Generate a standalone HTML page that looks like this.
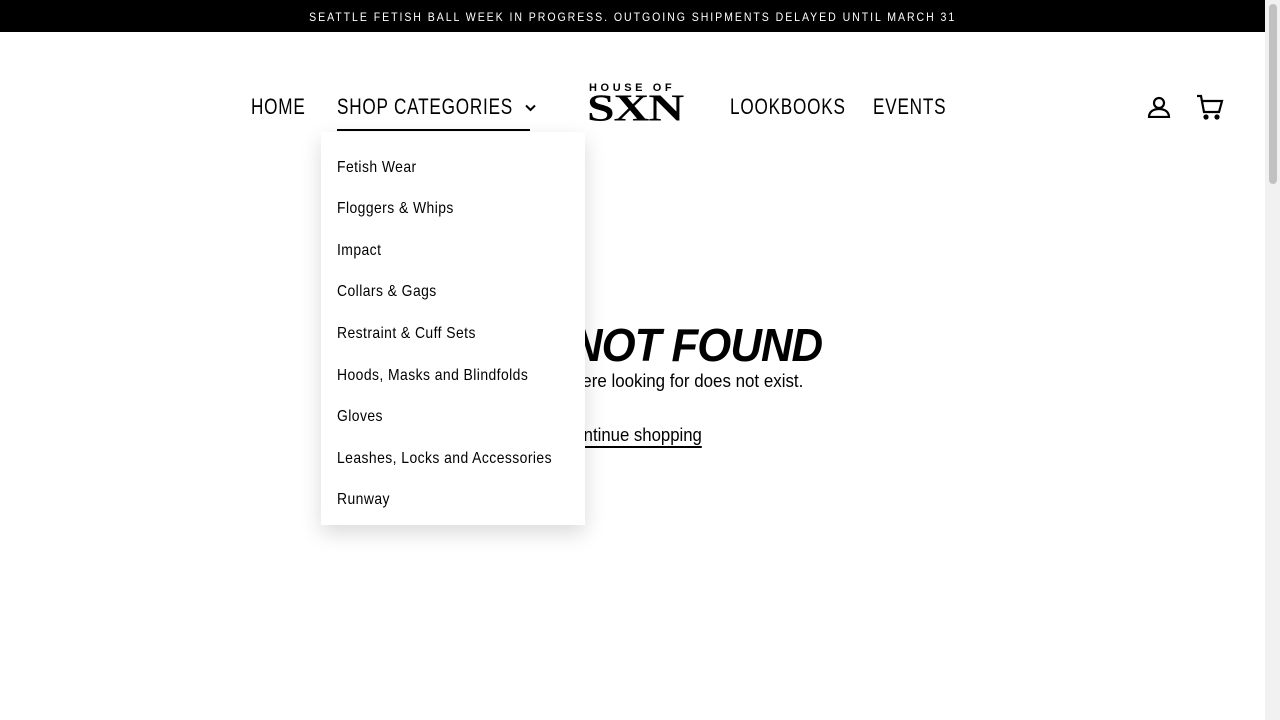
<!DOCTYPE html>
<html><head><style>
*{margin:0;padding:0;box-sizing:border-box}
body{width:1280px;height:720px;overflow:hidden;background:#fff;font-family:"Liberation Sans",sans-serif;color:#000;position:relative}
.bar{position:absolute;left:0;top:0;width:1265px;height:32px;background:#000;color:#fff;font-size:12px;letter-spacing:2.2px;text-align:center;line-height:34px}
.bar span{display:inline-block;transform:scaleX(.88)}
.sb{position:absolute;right:0;top:0;width:15px;height:720px;background:#f1f1f1}
.sb div{position:absolute;left:4px;top:4px;width:8px;height:180px;border-radius:4px;background:#c1c1c1}
.nav{position:absolute;top:94px;font-size:22px;letter-spacing:1px;transform:scaleX(.78);transform-origin:left;white-space:nowrap}
.t{position:absolute;left:0;width:1265px;text-align:center}
.t span{display:inline-block}
.dd{position:absolute;left:321px;top:132px;width:264px;height:393px;background:#fff;box-shadow:0 8px 20px rgba(0,0,0,.15)}
.dd div{position:absolute;left:16px;font-size:16px;letter-spacing:.5px;transform:scaleX(.87);transform-origin:left;white-space:nowrap;margin-top:1px}
</style></head><body>
<div class="bar"><span>SEATTLE FETISH BALL WEEK IN PROGRESS. OUTGOING SHIPMENTS DELAYED UNTIL MARCH 31</span></div>
<div class="sb"><div></div></div>
<div class="nav" style="left:251px">HOME</div>
<div class="nav" style="left:337px">SHOP CATEGORIES</div>
<svg style="position:absolute;left:525px;top:104px" width="11" height="8" viewBox="0 0 11 8" fill="none" stroke="#000" stroke-width="2"><path d="M1 1.5l4.5 4.5 4.5-4.5"/></svg>
<div style="position:absolute;left:337px;top:129px;width:193px;height:2px;background:#000"></div>
<div style="position:absolute;left:589px;top:82px;font-size:11px;font-weight:bold;letter-spacing:3.6px">HOUSE OF</div>
<div style="position:absolute;left:587px;top:86px;font-family:'Liberation Serif',serif;font-size:46px;letter-spacing:-1px;transform:scale(1.08,.82);transform-origin:left top;font-weight:bold">SXN</div>
<div class="nav" style="left:730px">LOOKBOOKS</div>
<div class="nav" style="left:873px">EVENTS</div>
<svg style="position:absolute;left:1147px;top:96px" width="24" height="22" viewBox="0 0 24 22" fill="none" stroke="#000" stroke-width="2.2"><circle cx="12" cy="7" r="5"/><path d="M2 21c0-5 4-8 10-8s10 3 10 8z"/></svg>
<svg style="position:absolute;left:1196px;top:94px" width="28" height="26" viewBox="0 0 28 26" fill="none" stroke="#000" stroke-width="2.2"><path d="M1 2h4l3 16h15l3-11H7"/><circle cx="10" cy="23" r="1.5" fill="#000"/><circle cx="21" cy="23" r="1.5" fill="#000"/></svg>
<div class="t" style="top:318px;font-size:46px;font-weight:bold;font-style:italic;letter-spacing:-1px"><span style="transform:scaleX(.95)">PAGE NOT FOUND</span></div>
<div class="t" style="top:371px;font-size:18px"><span style="transform:scaleX(.94)">The page you were looking for does not exist.</span></div>
<div class="t" style="top:425px;font-size:18px"><span style="border-bottom:2px solid #000;transform:scaleX(.93)">Continue shopping</span></div>
<div class="dd">
<div style="top:26px">Fetish Wear</div>
<div style="top:67px">Floggers &amp; Whips</div>
<div style="top:109px">Impact</div>
<div style="top:150px">Collars &amp; Gags</div>
<div style="top:192px">Restraint &amp; Cuff Sets</div>
<div style="top:234px">Hoods, Masks and Blindfolds</div>
<div style="top:275px">Gloves</div>
<div style="top:317px">Leashes, Locks and Accessories</div>
<div style="top:358px">Runway</div>
</div>
</body></html>
